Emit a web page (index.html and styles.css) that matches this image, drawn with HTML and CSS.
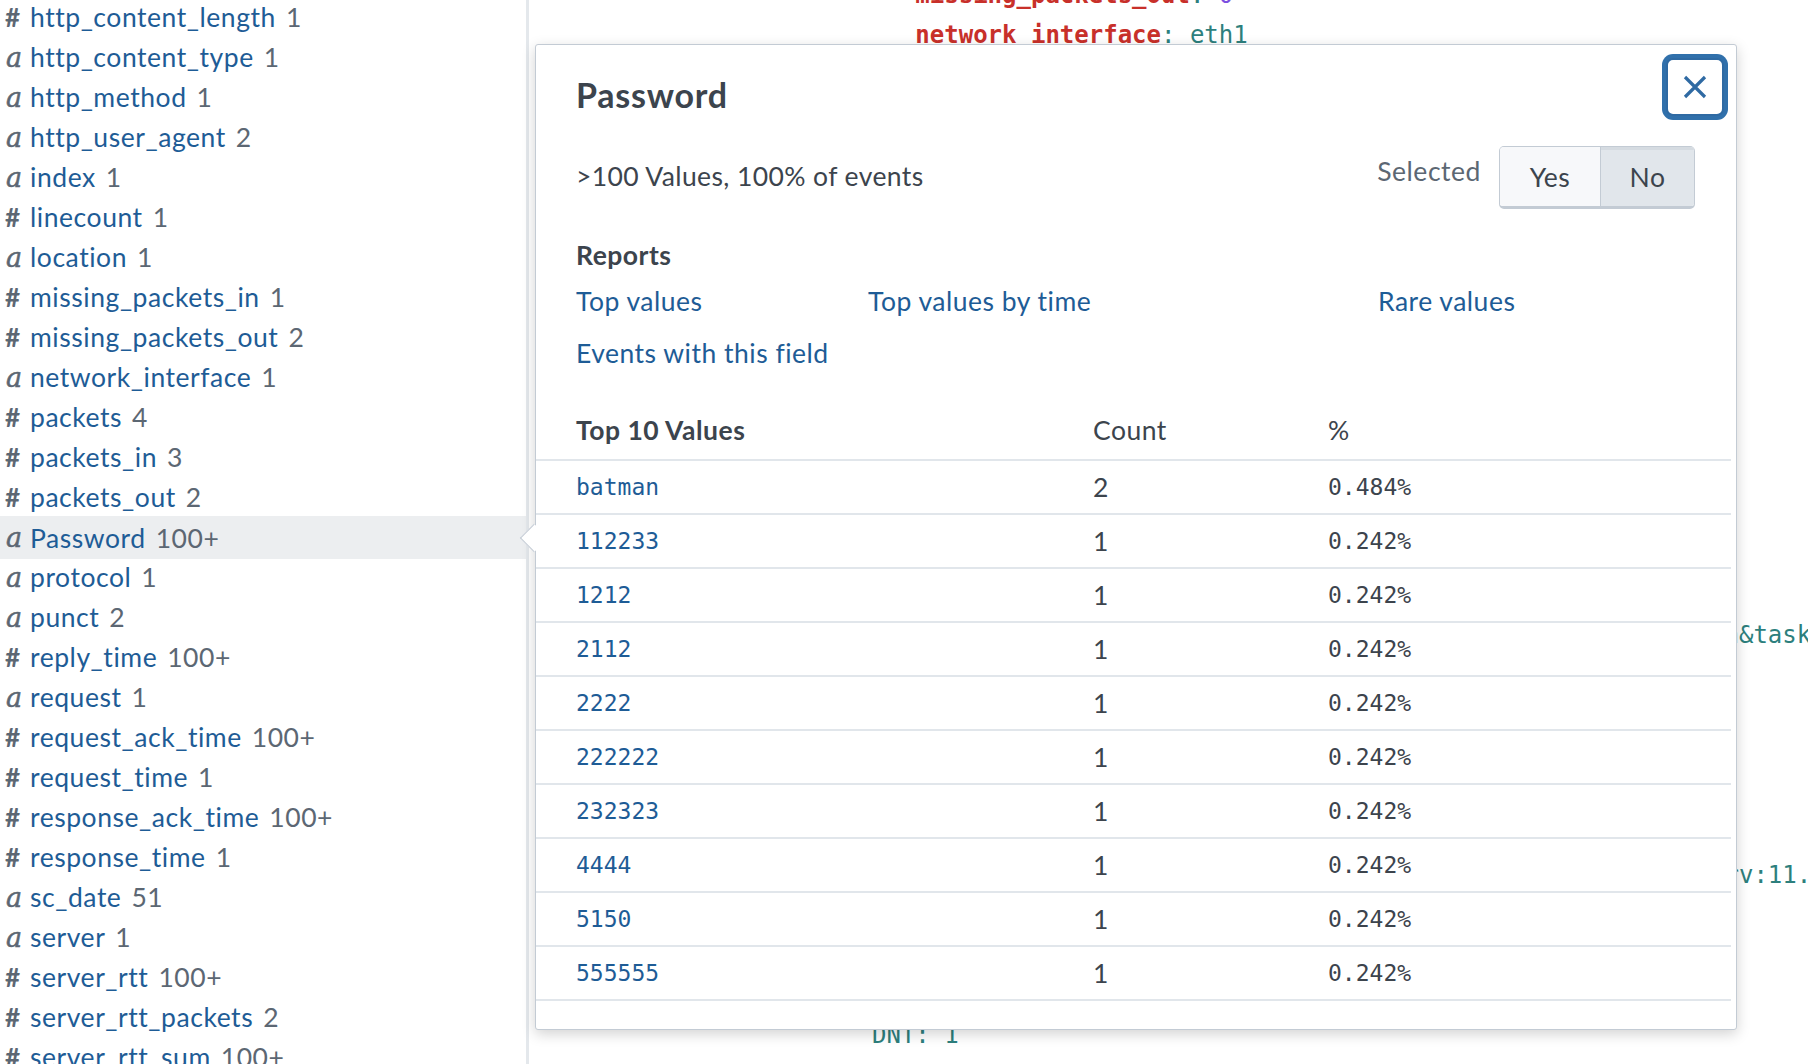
FILE: index.html
```html
<!DOCTYPE html>
<html lang="en">
<head>
<meta charset="utf-8">
<title>Password field summary</title>
<link rel="stylesheet" href="styles.css">
</head>
<body>
<div class="page">
  <aside class="sidebar">
    <ul class="fields">
      <li class="field"><span class="type num">#</span><span class="name">http_content_length</span><span class="count">1</span></li>
      <li class="field"><span class="type str">a</span><span class="name">http_content_type</span><span class="count">1</span></li>
      <li class="field"><span class="type str">a</span><span class="name">http_method</span><span class="count">1</span></li>
      <li class="field"><span class="type str">a</span><span class="name">http_user_agent</span><span class="count">2</span></li>
      <li class="field"><span class="type str">a</span><span class="name">index</span><span class="count">1</span></li>
      <li class="field"><span class="type num">#</span><span class="name">linecount</span><span class="count">1</span></li>
      <li class="field"><span class="type str">a</span><span class="name">location</span><span class="count">1</span></li>
      <li class="field"><span class="type num">#</span><span class="name">missing_packets_in</span><span class="count">1</span></li>
      <li class="field"><span class="type num">#</span><span class="name">missing_packets_out</span><span class="count">2</span></li>
      <li class="field"><span class="type str">a</span><span class="name">network_interface</span><span class="count">1</span></li>
      <li class="field"><span class="type num">#</span><span class="name">packets</span><span class="count">4</span></li>
      <li class="field"><span class="type num">#</span><span class="name">packets_in</span><span class="count">3</span></li>
      <li class="field"><span class="type num">#</span><span class="name">packets_out</span><span class="count">2</span></li>
      <li class="field active"><span class="type str">a</span><span class="name">Password</span><span class="count">100+</span></li>
      <li class="field"><span class="type str">a</span><span class="name">protocol</span><span class="count">1</span></li>
      <li class="field"><span class="type str">a</span><span class="name">punct</span><span class="count">2</span></li>
      <li class="field"><span class="type num">#</span><span class="name">reply_time</span><span class="count">100+</span></li>
      <li class="field"><span class="type str">a</span><span class="name">request</span><span class="count">1</span></li>
      <li class="field"><span class="type num">#</span><span class="name">request_ack_time</span><span class="count">100+</span></li>
      <li class="field"><span class="type num">#</span><span class="name">request_time</span><span class="count">1</span></li>
      <li class="field"><span class="type num">#</span><span class="name">response_ack_time</span><span class="count">100+</span></li>
      <li class="field"><span class="type num">#</span><span class="name">response_time</span><span class="count">1</span></li>
      <li class="field"><span class="type str">a</span><span class="name">sc_date</span><span class="count">51</span></li>
      <li class="field"><span class="type str">a</span><span class="name">server</span><span class="count">1</span></li>
      <li class="field"><span class="type num">#</span><span class="name">server_rtt</span><span class="count">100+</span></li>
      <li class="field"><span class="type num">#</span><span class="name">server_rtt_packets</span><span class="count">2</span></li>
      <li class="field"><span class="type num">#</span><span class="name">server_rtt_sum</span><span class="count">100+</span></li>
    </ul>
  </aside>

  <main class="events">
<pre class="raw">   <span class="k">missing_packets_out</span>: <span class="n">0</span>
   <span class="k">network_interface</span>: <span class="v">eth1</span>
   <span class="k">packets</span>: <span class="n">12</span>
   <span class="k">packets_in</span>: <span class="n">6</span>
   <span class="k">packets_out</span>: <span class="n">6</span>
   <span class="k">protocol</span>: <span class="v">HTTP</span>
   <span class="k">reply_time</span>: <span class="n">3120</span>
   <span class="k">request_ack_time</span>: <span class="n">412</span>
   <span class="k">request_time</span>: <span class="n">0</span>
   <span class="k">response_ack_time</span>: <span class="n">1187</span>
   <span class="k">response_time</span>: <span class="n">0</span>
   <span class="k">server</span>: <span class="v">Apache</span>
<span class="v">POST /joomla/administrator/index.php HTTP/1.1</span>
<span class="v">Host: 192.168.250.70</span>
<span class="v">Connection: Keep-Alive</span>
<span class="v">Accept: text/html, application/xhtml+xml, */*</span>
<span class="v">Referer: http://192.168.25.70/administrator/index.php?option&amp;task=login</span>
<span class="v">Accept-Language: en-US</span>
<span class="v">Content-Type: application/x-www-form-urlencoded</span>
<span class="v">Accept-Encoding: gzip, deflate</span>
<span class="v">Content-Length: 117</span>
<span class="v">Cache-Control: no-cache</span>
<span class="v">User-Agent: Mozilla/5.0 (Windows NT 6.1; x64; Trident/7.0; rv:11.0) like Gecko</span>
<span class="v">Cookie: 4a8b1c2d3e4f5a6b7c8d9e0f=8c7b2e1d</span>
<span class="v">X-Forwarded-For: 40.80.148.42</span>
<span class="v">Pragma: no-cache</span>
<span class="v">DNT: 1</span>
</pre>
  </main>

  <section class="popover">
    <span class="arrow"></span>
    <button class="close" aria-label="Close">
      <svg width="24" height="24" viewBox="0 0 24 24"><path d="M2 2 L22 22 M22 2 L2 22" stroke="currentColor" stroke-width="3.2" fill="none" stroke-linecap="butt"/></svg>
    </button>
    <h2 class="title">Password</h2>
    <div class="summary">
      <span class="stats">&gt;100 Values, 100% of events</span>
      <div class="selected">
        <span class="sel-label">Selected</span>
        <div class="toggle">
          <button class="opt yes">Yes</button>
          <button class="opt no">No</button>
        </div>
      </div>
    </div>
    <h3 class="reports-title">Reports</h3>
    <div class="reports">
      <a class="report">Top values</a>
      <a class="report">Top values by time</a>
      <a class="report">Rare values</a>
      <a class="report">Events with this field</a>
    </div>
    <table class="values">
      <thead>
        <tr><th class="c-val">Top 10 Values</th><th class="c-cnt">Count</th><th class="c-pct">%</th></tr>
      </thead>
      <tbody>
        <tr><td class="val">batman</td><td class="cnt">2</td><td class="pct">0.484%</td></tr>
        <tr><td class="val">112233</td><td class="cnt">1</td><td class="pct">0.242%</td></tr>
        <tr><td class="val">1212</td><td class="cnt">1</td><td class="pct">0.242%</td></tr>
        <tr><td class="val">2112</td><td class="cnt">1</td><td class="pct">0.242%</td></tr>
        <tr><td class="val">2222</td><td class="cnt">1</td><td class="pct">0.242%</td></tr>
        <tr><td class="val">222222</td><td class="cnt">1</td><td class="pct">0.242%</td></tr>
        <tr><td class="val">232323</td><td class="cnt">1</td><td class="pct">0.242%</td></tr>
        <tr><td class="val">4444</td><td class="cnt">1</td><td class="pct">0.242%</td></tr>
        <tr><td class="val">5150</td><td class="cnt">1</td><td class="pct">0.242%</td></tr>
        <tr><td class="val">555555</td><td class="cnt">1</td><td class="pct">0.242%</td></tr>
      </tbody>
    </table>
  </section>
</div>
</body>
</html>
```

FILE: styles.css
```css
* { box-sizing: border-box; }

html, body {
  margin: 0;
  padding: 0;
  width: 1808px;
  height: 1064px;
  overflow: hidden;
  background: #ffffff;
  font-family: Lato, "Open Sans", "Liberation Sans", sans-serif;
  color: #3c444d;
}

.page {
  position: relative;
  display: flex;
  width: 1808px;
  height: 1064px;
  overflow: hidden;
}

/* ---------- sidebar ---------- */
.sidebar {
  flex: 0 0 529px;
  border-right: 3px solid #e4e8ec;
  background: #fff;
}

.fields {
  list-style: none;
  margin: -3px 0 0;
  padding: 0;
}

.field {
  display: flex;
  align-items: center;
  height: 40px;
  padding-left: 5px;
  font-size: 26.5px;
  letter-spacing: 0.55px;
  white-space: nowrap;
}

.field.active {
  background: #eceef0;
  height: 43px;
  margin: -1px 0 -2px;
}

.type {
  width: 25px;
  color: #5c6773;
  flex: none;
  letter-spacing: 0;
}
.type.str {
  font-family: "DejaVu Serif", "Liberation Serif", serif;
  font-style: italic;
  font-size: 27px;
  -webkit-text-stroke: 0.5px #5c6773;
  padding-left: 1px;
}
.type.num {
  font-size: 26px;
  font-weight: 700;
}

.name {
  color: #1e5c96;
}

.count {
  color: #5c6773;
  margin-left: 10px;
}

/* ---------- raw events (background) ---------- */
.events {
  flex: 1;
  padding-left: 343px;
}

.raw {
  margin: -25px 0 0;
  font-family: "DejaVu Sans Mono", "Liberation Mono", monospace;
  font-size: 24px;
  line-height: 40px;
  color: #2d7f7d;
}
.raw .k { color: #c8302a; font-weight: bold; }
.raw .v { color: #2d7f7d; }
.raw .n { color: #7b4fe0; }

/* ---------- popover ---------- */
.popover {
  position: absolute;
  left: 535px;
  top: 44px;
  width: 1202px;
  height: 986px;
  background: #fff;
  border: 1px solid #c3cbd4;
  border-radius: 3px;
  box-shadow: 0 4px 14px rgba(0, 0, 0, 0.18);
  padding: 0 0 0 40px;
  z-index: 2;
}

.arrow {
  position: absolute;
  left: -12px;
  top: 483px;
  width: 20px;
  height: 20px;
  background: #fff;
  border-left: 1px solid #c3cbd4;
  border-bottom: 1px solid #c3cbd4;
  transform: rotate(45deg);
}

.close {
  position: absolute;
  right: 12px;
  top: 13px;
  width: 58px;
  height: 58px;
  padding: 0;
  display: flex;
  align-items: center;
  justify-content: center;
  background: #fff;
  color: #2f6aa3;
  border: 2px solid #2f6aa3;
  border-radius: 7px;
  box-shadow: 0 0 0 4px #3070ab;
}

.title {
  margin: 32px 0 0;
  font-size: 34px;
  line-height: 36px;
  letter-spacing: 0.75px;
  font-weight: 700;
  color: #3c444d;
}

.summary {
  display: flex;
  align-items: center;
  justify-content: space-between;
  margin-top: 33px;
  padding-right: 41px;
  height: 63px;
}

.stats {
  font-size: 26.5px;
  letter-spacing: 0.4px;
  color: #3c444d;
  margin-top: -4px;
}

.selected {
  display: flex;
  align-items: center;
  gap: 18px;
}

.sel-label {
  font-size: 26.5px;
  letter-spacing: 0.55px;
  color: #5c6773;
  margin-top: -14px;
}

.toggle {
  display: flex;
  height: 63px;
  border: 1px solid #c3cbd4;
  border-bottom-width: 3px;
  border-radius: 5px;
  overflow: hidden;
}

.opt {
  font-family: inherit;
  font-size: 26.5px;
  letter-spacing: 0.5px;
  color: #3c444d;
  border: 0;
  margin: 0;
  padding: 0;
  height: 100%;
}
.opt.yes {
  width: 101px;
  background: #f7f8fa;
  border-right: 1px solid #c3cbd4;
}
.opt.no {
  width: 93px;
  background: #e1e6eb;
  box-shadow: inset 0 3px 0 #d5dbe1;
}

.reports-title {
  margin: 31px 0 0;
  font-size: 26.5px;
  letter-spacing: 0.5px;
  line-height: 30px;
  font-weight: 700;
  color: #3c444d;
}

.reports {
  display: grid;
  grid-template-columns: 292px 510px auto;
  row-gap: 22px;
  margin-top: 16px;
}

.report {
  font-size: 26.5px;
  letter-spacing: 0.5px;
  line-height: 30px;
  color: #1e5c96;
  text-decoration: none;
}

.values {
  margin: 47px 5px 0 -40px;
  width: calc(100% + 35px);
  border-collapse: collapse;
}

.values th {
  text-align: left;
  font-size: 26.5px;
  letter-spacing: 0.5px;
  line-height: 30px;
  padding: 0 0 14px;
  border-bottom: 2px solid #e1e6eb;
  color: #3c444d;
}
.values th.c-val { font-weight: 700; padding-left: 40px; width: 557px; }
.values th.c-cnt { font-weight: 400; width: 235px; }
.values th.c-pct { font-weight: 400; }

.values td {
  height: 54px;
  padding: 0;
  border-bottom: 2px solid #e1e6eb;
  font-family: "DejaVu Sans Mono", "Liberation Mono", monospace;
  font-size: 23px;
  color: #3c444d;
}
.values td.val {
  padding-left: 40px;
  color: #1e5c96;
}
.values td.cnt {
  font-family: Lato, "Open Sans", sans-serif;
  font-size: 26.5px;
}
```
